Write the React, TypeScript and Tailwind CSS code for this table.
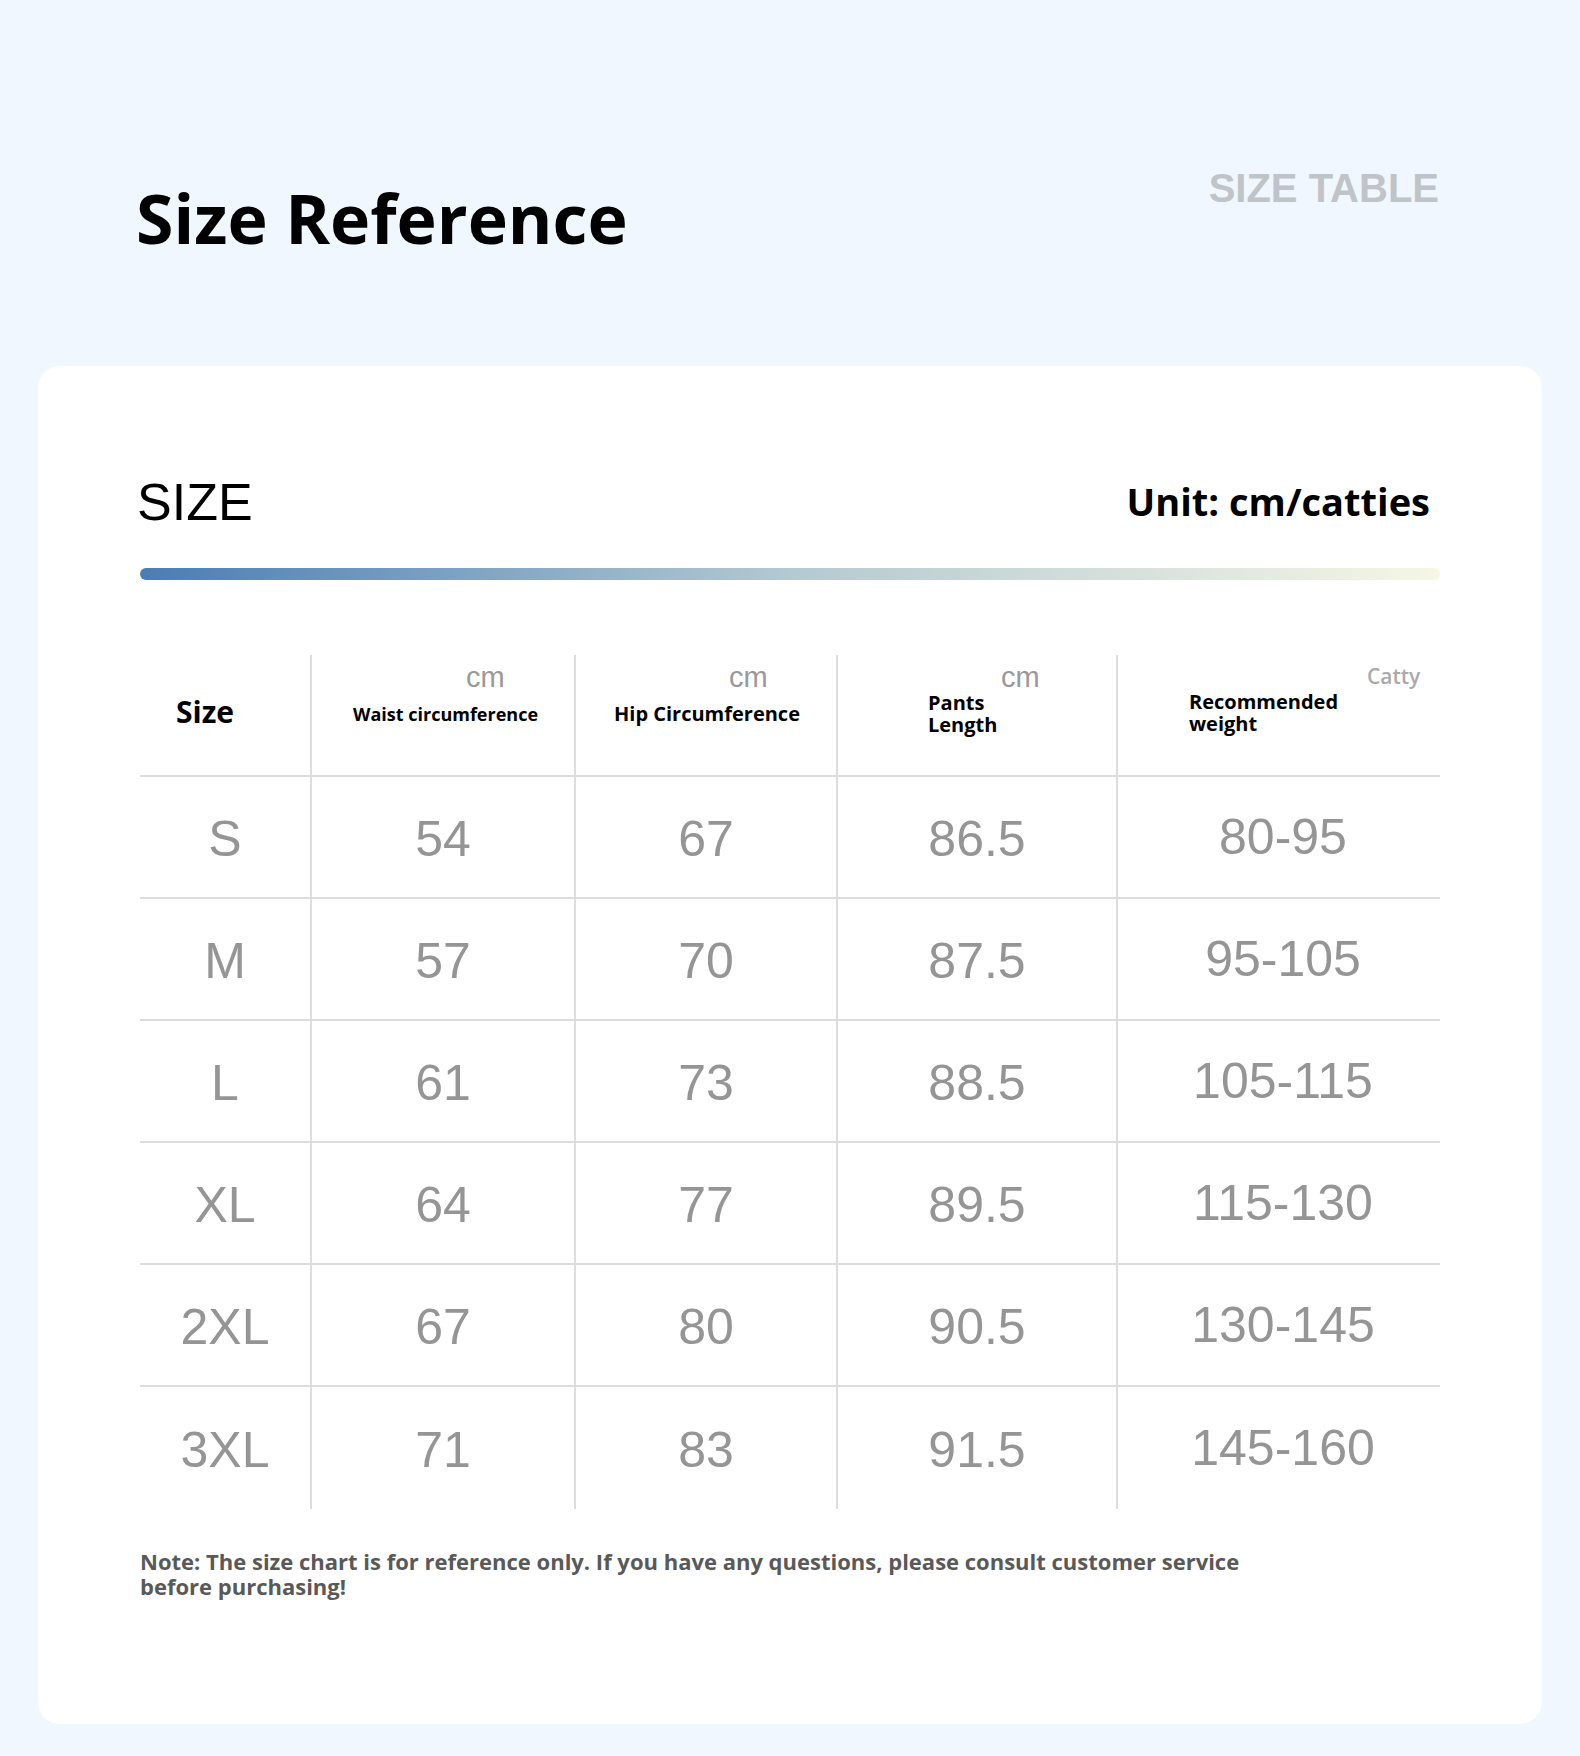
const rows = [
  ['S', '54', '67', '86.5', '80-95'],
  ['M', '57', '70', '87.5', '95-105'],
  ['L', '61', '73', '88.5', '105-115'],
  ['XL', '64', '77', '89.5', '115-130'],
  ['2XL', '67', '80', '90.5', '130-145'],
  ['3XL', '71', '83', '91.5', '145-160'],
];

const sans = "font-['Open_Sans','Noto_Sans',sans-serif]";
const arial = "font-['Liberation_Sans',Arial,sans-serif]";

export default function App() {
  return (
    <main className="w-[1580px] h-[1756px] bg-[#f0f7fe] flex flex-col">
      {/* page title */}
      <header className="h-[366px] flex justify-between pl-[136px] pr-[141px]">
        <h1 className={`${sans} mt-[184px] text-[68px] leading-none font-bold text-black`}>
          Size Reference
        </h1>
        <p className={`${arial} mt-[168px] text-[40px] leading-none font-bold text-[#c0c4c9]`}>
          SIZE TABLE
        </p>
      </header>

      {/* card */}
      <section className="mx-[38px] h-[1358px] bg-white rounded-[22px] px-[102px] flex flex-col">
        <div className="flex justify-between items-start h-[202px]">
          <h2 className={`${arial} mt-[110px] -ml-[3px] text-[52px] leading-none text-black`}>SIZE</h2>
          <p className={`${sans} mt-[116px] text-[38px] leading-none font-bold text-black mr-[10px]`}>
            Unit: cm/catties
          </p>
        </div>
        <div className="h-[12px] rounded-full bg-linear-to-r from-[#4a7db3] via-[#b4c9d1] to-[#f6f7e5]" />

        {/* table */}
        <div className="mt-[75px] grid grid-cols-[170px_264px_262px_280px_324px]">
          <div className="h-[122px] border-b-2 border-[#dddddd] flex">
            <span className={`${sans} mt-[40px] ml-[36px] text-[30px] leading-[34px] font-bold text-black`}>Size</span>
          </div>
          <div className="h-[122px] border-b-2 border-l-2 border-[#dddddd] flex flex-col">
            <span className={`${arial} mt-[8px] ml-[154px] text-[29px] leading-[28px] text-[#999999]`}>cm</span>
            <span className={`${sans} mt-[12px] ml-[41px] text-[18px] leading-[22px] font-bold text-black`}>Waist circumference</span>
          </div>
          <div className="h-[122px] border-b-2 border-l-2 border-[#dddddd] flex flex-col">
            <span className={`${arial} mt-[8px] ml-[153px] text-[29px] leading-[28px] text-[#999999]`}>cm</span>
            <span className={`${sans} mt-[11px] ml-[38px] text-[20px] leading-[24px] font-bold text-black`}>Hip Circumference</span>
          </div>
          <div className="h-[122px] border-b-2 border-l-2 border-[#dddddd] flex flex-col">
            <span className={`${arial} mt-[8px] ml-[163px] text-[29px] leading-[28px] text-[#999999]`}>cm</span>
            <span className={`${sans} mt-[1px] ml-[90px] text-[20px] leading-[22px] font-bold text-black`}>
              Pants
              <br />
              Length
            </span>
          </div>
          <div className="h-[122px] border-b-2 border-l-2 border-[#dddddd] flex flex-col">
            <span className={`${sans} mt-[9px] ml-[249px] text-[21px] leading-[24px] font-semibold text-[#aaaaaa]`}>Catty</span>
            <span className={`${sans} mt-[3px] ml-[71px] text-[20px] leading-[22px] font-bold text-black`}>
              Recommended
              <br />
              weight
            </span>
          </div>

          {rows.map((r, i) =>
            r.map((v, j) => (
              <div
                key={`${i}-${j}`}
                className={`h-[122px] flex items-center justify-center border-[#dddddd] ${
                  i < rows.length - 1 ? 'border-b-2' : ''
                } ${j > 0 ? 'border-l-2' : ''} ${j === 4 ? 'pl-[8px]' : ''}`}
              >
                <span
                  className={`${arial} ${j === 4 ? 'mt-0' : 'mt-[4px]'} text-[50px] leading-none text-[#959595]`}
                >
                  {v}
                </span>
              </div>
            ))
          )}
        </div>

        <p className={`${sans} mt-[40px] w-[1120px] text-[22px] leading-[25px] font-bold text-[#595959]`}>
          Note: The size chart is for reference only. If you have any questions, please consult customer service
          before purchasing!
        </p>
      </section>
    </main>
  );
}
